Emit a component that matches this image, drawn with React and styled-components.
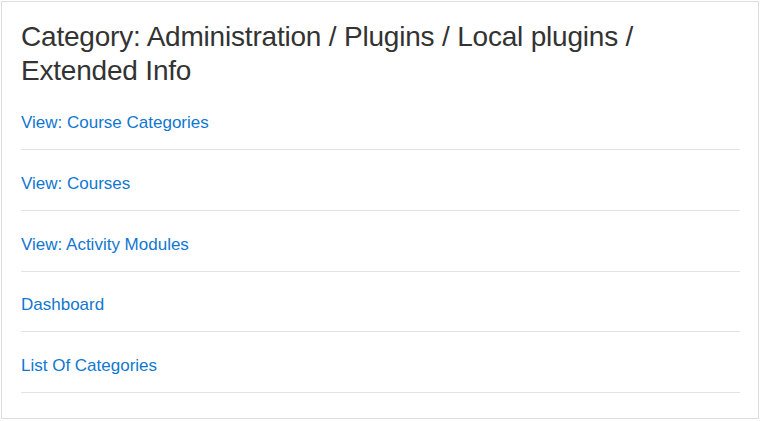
import React from 'react';
import styled, { createGlobalStyle } from 'styled-components';

const GlobalStyle = createGlobalStyle`
  body {
    margin: 0;
    background: #ffffff;
    font-family: "Liberation Sans", Arial, sans-serif;
  }
`;

const Card = styled.div`
  margin: 1px;
  width: 758px;
  height: 418px;
  box-sizing: border-box;
  border: 1px solid #dddddd;
  background: #ffffff;
  padding: 18px 18px 24px 19px;
`;

const Title = styled.h3`
  margin: 0 0 23px 0;
  font-size: 28px;
  font-weight: 400;
  line-height: 1.2;
  letter-spacing: -0.2px;
  color: #333333;
`;

const List = styled.ul`
  list-style: none;
  margin: 0;
  padding: 0;
`;

const Item = styled.li`
  padding: ${(props) => (props.first ? '0' : '20.75px')} 0 13.5px 0;
  border-bottom: 1px solid #e3e3e3;
`;

const Link = styled.a`
  font-size: 17px;
  line-height: 25.5px;
  color: #1177d1;
  text-decoration: none;
`;

const links = [
  'View: Course Categories',
  'View: Courses',
  'View: Activity Modules',
  'Dashboard',
  'List Of Categories',
];

const App = () => {
  return (
    <>
      <GlobalStyle />
      <Card>
        <Title>Category: Administration / Plugins / Local plugins / Extended Info</Title>
        <List>
          {links.map((label, i) => (
            <Item key={label} first={i === 0}>
              <Link href="#">{label}</Link>
            </Item>
          ))}
        </List>
      </Card>
    </>
  );
};

export default App;
